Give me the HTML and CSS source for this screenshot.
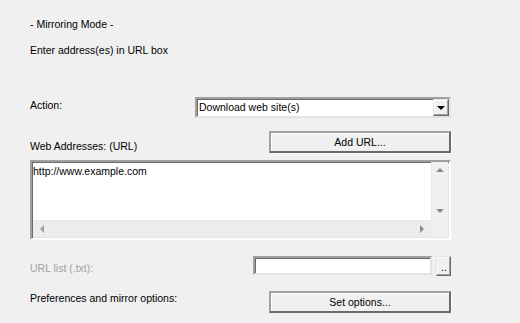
FILE: index.html
```html
<!DOCTYPE html>
<html lang="en">
<head>
    <meta charset="UTF-8">
    <title>Mirroring Mode</title>
    <link rel="stylesheet" href="styles.css">
</head>
<body>

<div class="panel">
    <div class="title">- Mirroring Mode -</div>
    <div class="hint">Enter address(es) in URL box</div>

    <div class="row row-action">
        <span class="label">Action:</span>
        <div class="combo">
            <span class="combo-text">Download web site(s)</span>
            <span class="combo-btn"><span class="tri-down"></span></span>
        </div>
    </div>

    <div class="row row-web">
        <span class="label">Web Addresses: (URL)</span>
        <button class="btn">Add URL...</button>
    </div>

    <div class="urlbox">
        <div class="urlbox-main">
            <div class="urlbox-text">http://www.example.com</div>
            <div class="vscroll">
                <span class="arrow arrow-up"></span>
                <span class="arrow arrow-down"></span>
            </div>
        </div>
        <div class="hscroll">
            <div class="hscroll-track">
                <span class="arrow arrow-left"></span>
                <span class="arrow arrow-right"></span>
            </div>
            <div class="corner"></div>
        </div>
    </div>

    <div class="row row-list">
        <span class="label disabled">URL list (.txt):</span>
        <div class="list-field">
            <div class="field"></div>
            <button class="btn-small">..</button>
        </div>
    </div>

    <div class="row row-prefs">
        <span class="label">Preferences and mirror options:</span>
        <button class="btn">Set options...</button>
    </div>
</div>

</body>
</html>
```

FILE: styles.css
```css
/* Dialog page */
body {
    margin: 0;
    background: #f0f0f0;
    font-family: 'Liberation Sans', Arial, sans-serif;
    font-size: 10.5px;
    color: #000;
}

.panel {
    width: 421px;
    padding: 18px 0 0 30px;
}

.title,
.hint {
    line-height: 13px;
}
.hint {
    margin-top: 13px;
}

/* Rows: label on the left, control on the right */
.row {
    display: flex;
    justify-content: space-between;
    align-items: flex-start;
}
.label {
    line-height: 13px;
}
.label.disabled {
    color: #a0a0a0;
}

.row-action {
    margin-top: 40px;
}
.row-action .label {
    padding-top: 2px;
}

.row-web {
    margin-top: 13px;
}
.row-web .label {
    padding-top: 9px;
}

.row-list {
    margin-top: 16px;
}
.row-list .label {
    padding-top: 6px;
}

.row-prefs {
    margin-top: 15px;
}
.row-prefs .label {
    padding-top: 1px;
}

/* Combo box */
.combo {
    width: 256px;
    height: 21px;
    box-sizing: border-box;
    display: flex;
    align-items: center;
    background: #fff;
    border: 2px solid;
    border-color: #a0a0a0 #e3e3e3 #e3e3e3 #a0a0a0;
    box-shadow: inset 1px 1px 0 #696969;
}
.combo-text {
    flex: 1;
    padding-left: 2px;
    line-height: 13px;
}
.combo-btn {
    width: 16px;
    height: 17px;
    box-sizing: border-box;
    display: flex;
    align-items: center;
    justify-content: center;
    background: #f0f0f0;
    border: 1px solid;
    border-color: #e3e3e3 #696969 #696969 #e3e3e3;
    box-shadow: inset -1px -1px 0 #a0a0a0, inset 1px 1px 0 #fff;
}
.tri-down {
    width: 0;
    height: 0;
    border-left: 4px solid transparent;
    border-right: 4px solid transparent;
    border-top: 4px solid #000;
}

/* Push buttons */
.btn {
    width: 182px;
    height: 22px;
    padding: 0;
    font-family: inherit;
    font-size: 10.5px;
    color: #000;
    background: #f0f0f0;
    border: 2px solid;
    border-color: #a0a0a0 #696969 #696969 #a0a0a0;
    box-shadow: 1px 1px 0 #fff, inset 1px 1px 0 #fff;
}

/* URL box with scrollbars */
.urlbox {
    margin-top: 7px;
    width: 421px;
    height: 80px;
    box-sizing: border-box;
    display: flex;
    flex-direction: column;
    border: 2px solid;
    border-color: #a0a0a0 #fff #fff #a0a0a0;
    box-shadow: inset 1px 1px 0 #696969, inset -1px -1px 0 #e3e3e3;
    background: #fff;
}
.urlbox-main {
    flex: 1;
    display: flex;
}
.urlbox-text {
    flex: 1;
    padding: 3px 0 0 1px;
    line-height: 13px;
}
.vscroll {
    width: 16px;
    margin-right: 1px;
    background: #f0f0f0;
    border-left: 1px solid #e8e8e8;
    display: flex;
    flex-direction: column;
    justify-content: space-between;
    align-items: center;
    padding: 6px 0 7px;
}
.hscroll {
    height: 17px;
    margin-bottom: 1px;
    display: flex;
}
.hscroll-track {
    flex: 1;
    margin-left: 1px;
    background: #ececec;
    border-top: 1px solid #e8e8e8;
    display: flex;
    justify-content: space-between;
    align-items: center;
    padding: 0 7px 0 7px;
}
.corner {
    width: 17px;
    background: #f0f0f0;
    margin-right: 1px;
}

.arrow {
    width: 0;
    height: 0;
}
.arrow-up {
    border-left: 4px solid transparent;
    border-right: 4px solid transparent;
    border-bottom: 4px solid #8a8a8a;
}
.arrow-down {
    border-left: 4px solid transparent;
    border-right: 4px solid transparent;
    border-top: 4px solid #8a8a8a;
}
.arrow-left {
    border-top: 4px solid transparent;
    border-bottom: 4px solid transparent;
    border-right: 4px solid #a0a0a0;
}
.arrow-right {
    border-top: 4px solid transparent;
    border-bottom: 4px solid transparent;
    border-left: 4px solid #8a8a8a;
}

/* URL list field */
.list-field {
    display: flex;
    gap: 4px;
}
.field {
    width: 179px;
    height: 19px;
    box-sizing: border-box;
    background: #fff;
    border: 2px solid;
    border-color: #a0a0a0 #e3e3e3 #e3e3e3 #a0a0a0;
    box-shadow: inset 1px 1px 0 #696969;
}
.btn-small {
    width: 15px;
    height: 20px;
    padding: 0 0 0 1px;
    font-family: inherit;
    font-size: 10.5px;
    line-height: 20px;
    color: #000;
    background: #f0f0f0;
    border: 1px solid;
    border-color: #e3e3e3 #696969 #696969 #e3e3e3;
    box-shadow: inset -1px -1px 0 #a0a0a0, inset 1px 1px 0 #fff;
}
```
